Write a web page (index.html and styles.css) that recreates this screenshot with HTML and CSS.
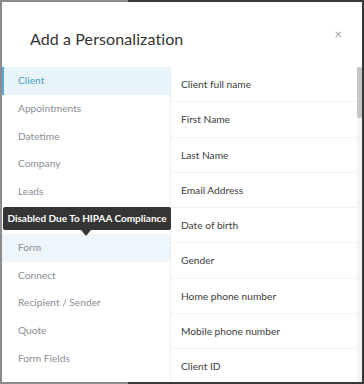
FILE: index.html
```html
<!DOCTYPE html>
<html lang="en">
<head>
    <meta charset="UTF-8">
    <meta name="viewport" content="width=device-width, initial-scale=1.0">
    <title>Add a Personalization</title>
    <link rel="stylesheet" href="styles.css">
</head>
<body>
    <div class="modal">
        <div class="modal-header">
            <h1>Add a Personalization</h1>
            <span class="close">&times;</span>
        </div>
        <div class="modal-body">
            <ul class="categories">
                <li class="active">Client</li>
                <li>Appointments</li>
                <li>Datetime</li>
                <li>Company</li>
                <li>Leads</li>
                <li class="hidden">Staff</li>
                <li class="hover">Form
                    <div class="tooltip">Disabled Due To HIPAA Compliance</div>
                </li>
                <li>Connect</li>
                <li>Recipient / Sender</li>
                <li>Quote</li>
                <li>Form Fields</li>
            </ul>
            <div class="fields-wrap">
                <ul class="fields">
                    <li>Client full name</li>
                    <li>First Name</li>
                    <li>Last Name</li>
                    <li>Email Address</li>
                    <li>Date of birth</li>
                    <li>Gender</li>
                    <li>Home phone number</li>
                    <li>Mobile phone number</li>
                    <li>Client ID</li>
                </ul>
                <div class="scroll-track"><div class="scroll-thumb"></div></div>
            </div>
        </div>
    </div>
</body>
</html>
```

FILE: styles.css
```css
* {
    margin: 0;
    padding: 0;
    box-sizing: border-box;
}

body {
    width: 364px;
    height: 384px;
    overflow: hidden;
    font-family: Lato, "Open Sans", sans-serif;
    background: linear-gradient(to right, #8b8b8b 128px, #38383b 128px);
    padding: 2px 2px 2px 2px;
}

.modal {
    background: #fff;
    height: 380px;
    display: flex;
    flex-direction: column;
}

.modal-header {
    height: 65px;
    display: flex;
    align-items: center;
    justify-content: space-between;
    padding: 8px 20px 0 28px;
}

.modal-header h1 {
    font-size: 16px;
    font-weight: 400;
    color: #333;
    letter-spacing: 0.1px;
}

.close {
    font-size: 13px;
    color: #999;
    margin-top: -10px;
}

.modal-body {
    flex: 1;
    display: flex;
    overflow: hidden;
}

.categories {
    list-style: none;
    width: 168px;
}

.categories li {
    position: relative;
    height: 27.8px;
    line-height: 27.8px;
    padding-left: 16px;
    font-size: 10.2px;
    color: #8a8d96;
}

.categories li.hidden {
    visibility: hidden;
}

.categories li.active {
    background: #e8f4fa;
    color: #4a9ec6;
    border-left: 2px solid #58a9cf;
    padding-left: 14px;
}

.categories li.hover {
    background: #eef6fb;
}

.tooltip {
    position: absolute;
    left: 1px;
    right: -1px;
    bottom: 32px;
    height: 23px;
    line-height: 23px;
    background: #353535;
    color: #fff;
    font-weight: 700;
    font-size: 10px;
    white-space: nowrap;
    text-align: center;
    border-radius: 2px;
}

.tooltip::after {
    content: "";
    position: absolute;
    left: 78px;
    top: 23px;
    border-left: 5px solid transparent;
    border-right: 5px solid transparent;
    border-top: 6px solid #353535;
}

.fields-wrap {
    flex: 1;
    display: flex;
    border-left: 1px solid #efefef;
}

.fields {
    list-style: none;
    flex: 1;
}

.fields li {
    height: 35.25px;
    line-height: 35px;
    padding-left: 10px;
    font-size: 10.2px;
    color: #3d3d3d;
    border-bottom: 1px solid #f1f1f1;
}

.scroll-track {
    width: 5px;
    background: #f4f4f4;
}

.scroll-thumb {
    height: 51px;
    background: #c6c6c6;
    border-radius: 2px;
}
```
